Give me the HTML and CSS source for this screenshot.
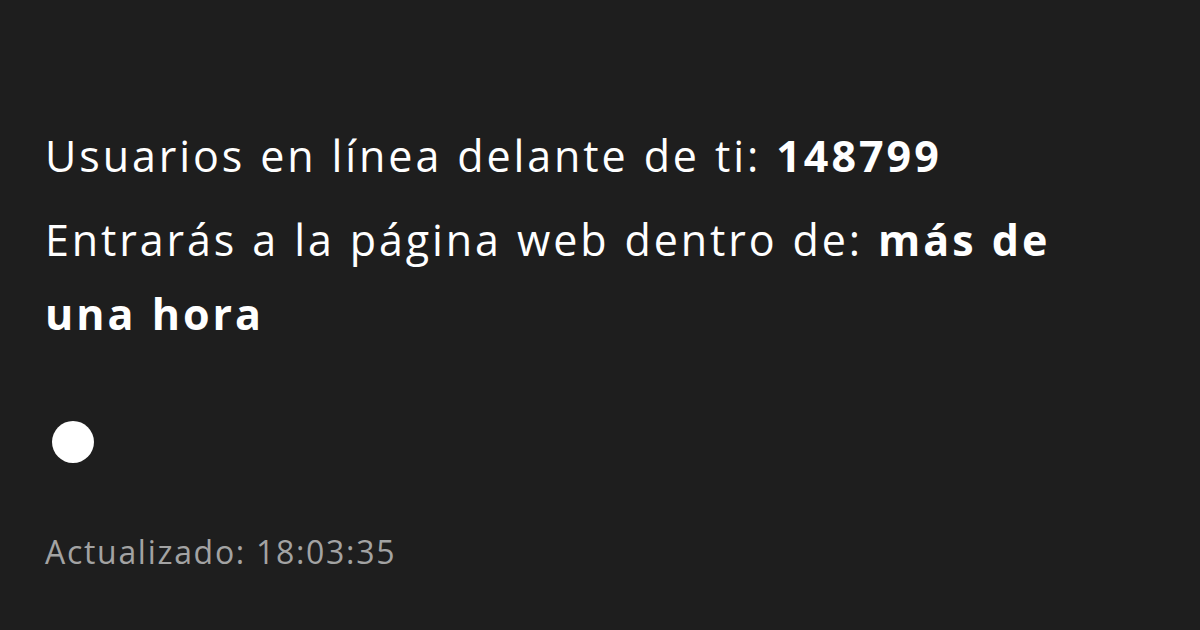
FILE: index.html
```html
<!DOCTYPE html>
<html lang="es">
<head>
  <meta charset="UTF-8">
  <meta name="viewport" content="width=device-width, initial-scale=1.0">
  <title>Sala de espera</title>
  <link rel="stylesheet" href="styles.css">
</head>
<body>
  <main class="queue">
    <div class="queue-info">
      <p class="queue-line">Usuarios en línea delante de ti: <strong>148799</strong></p>
      <p class="queue-line">Entrarás a la página web dentro de: <strong>más de una hora</strong></p>
    </div>

    <div class="spinner"></div>

    <p class="updated">Actualizado: 18:03:35</p>
  </main>
</body>
</html>
```

FILE: styles.css
```css
html {
  --bg: #1e1e1e;
  --text: #ffffff;
  --muted: #a3a3a3;
}

html, body {
  height: 100%;
  margin: 0;
  padding: 0;
}

body {
  background-color: var(--bg);
  color: var(--text);
  font-family: "Open Sans", "Liberation Sans", sans-serif;
}

.queue {
  display: flex;
  flex-direction: column;
  align-items: flex-start;
  padding: 119px 100px 0 45px;
}

.queue-info {
  display: flex;
  flex-direction: column;
  gap: 10px;
}

.queue-line {
  margin: 0;
  font-size: 43px;
  line-height: 74px;
  letter-spacing: 2.9px;
  word-spacing: 1px;
}

.queue-line strong {
  font-weight: 700;
  letter-spacing: 3px;
}

.spinner {
  width: 42px;
  height: 42px;
  margin: 70px 0 0 7px;
  border-radius: 50%;
  background-color: #fff;
}

.updated {
  margin: 67px 0 0;
  font-size: 32px;
  letter-spacing: 1.7px;
  color: var(--muted);
}
```
